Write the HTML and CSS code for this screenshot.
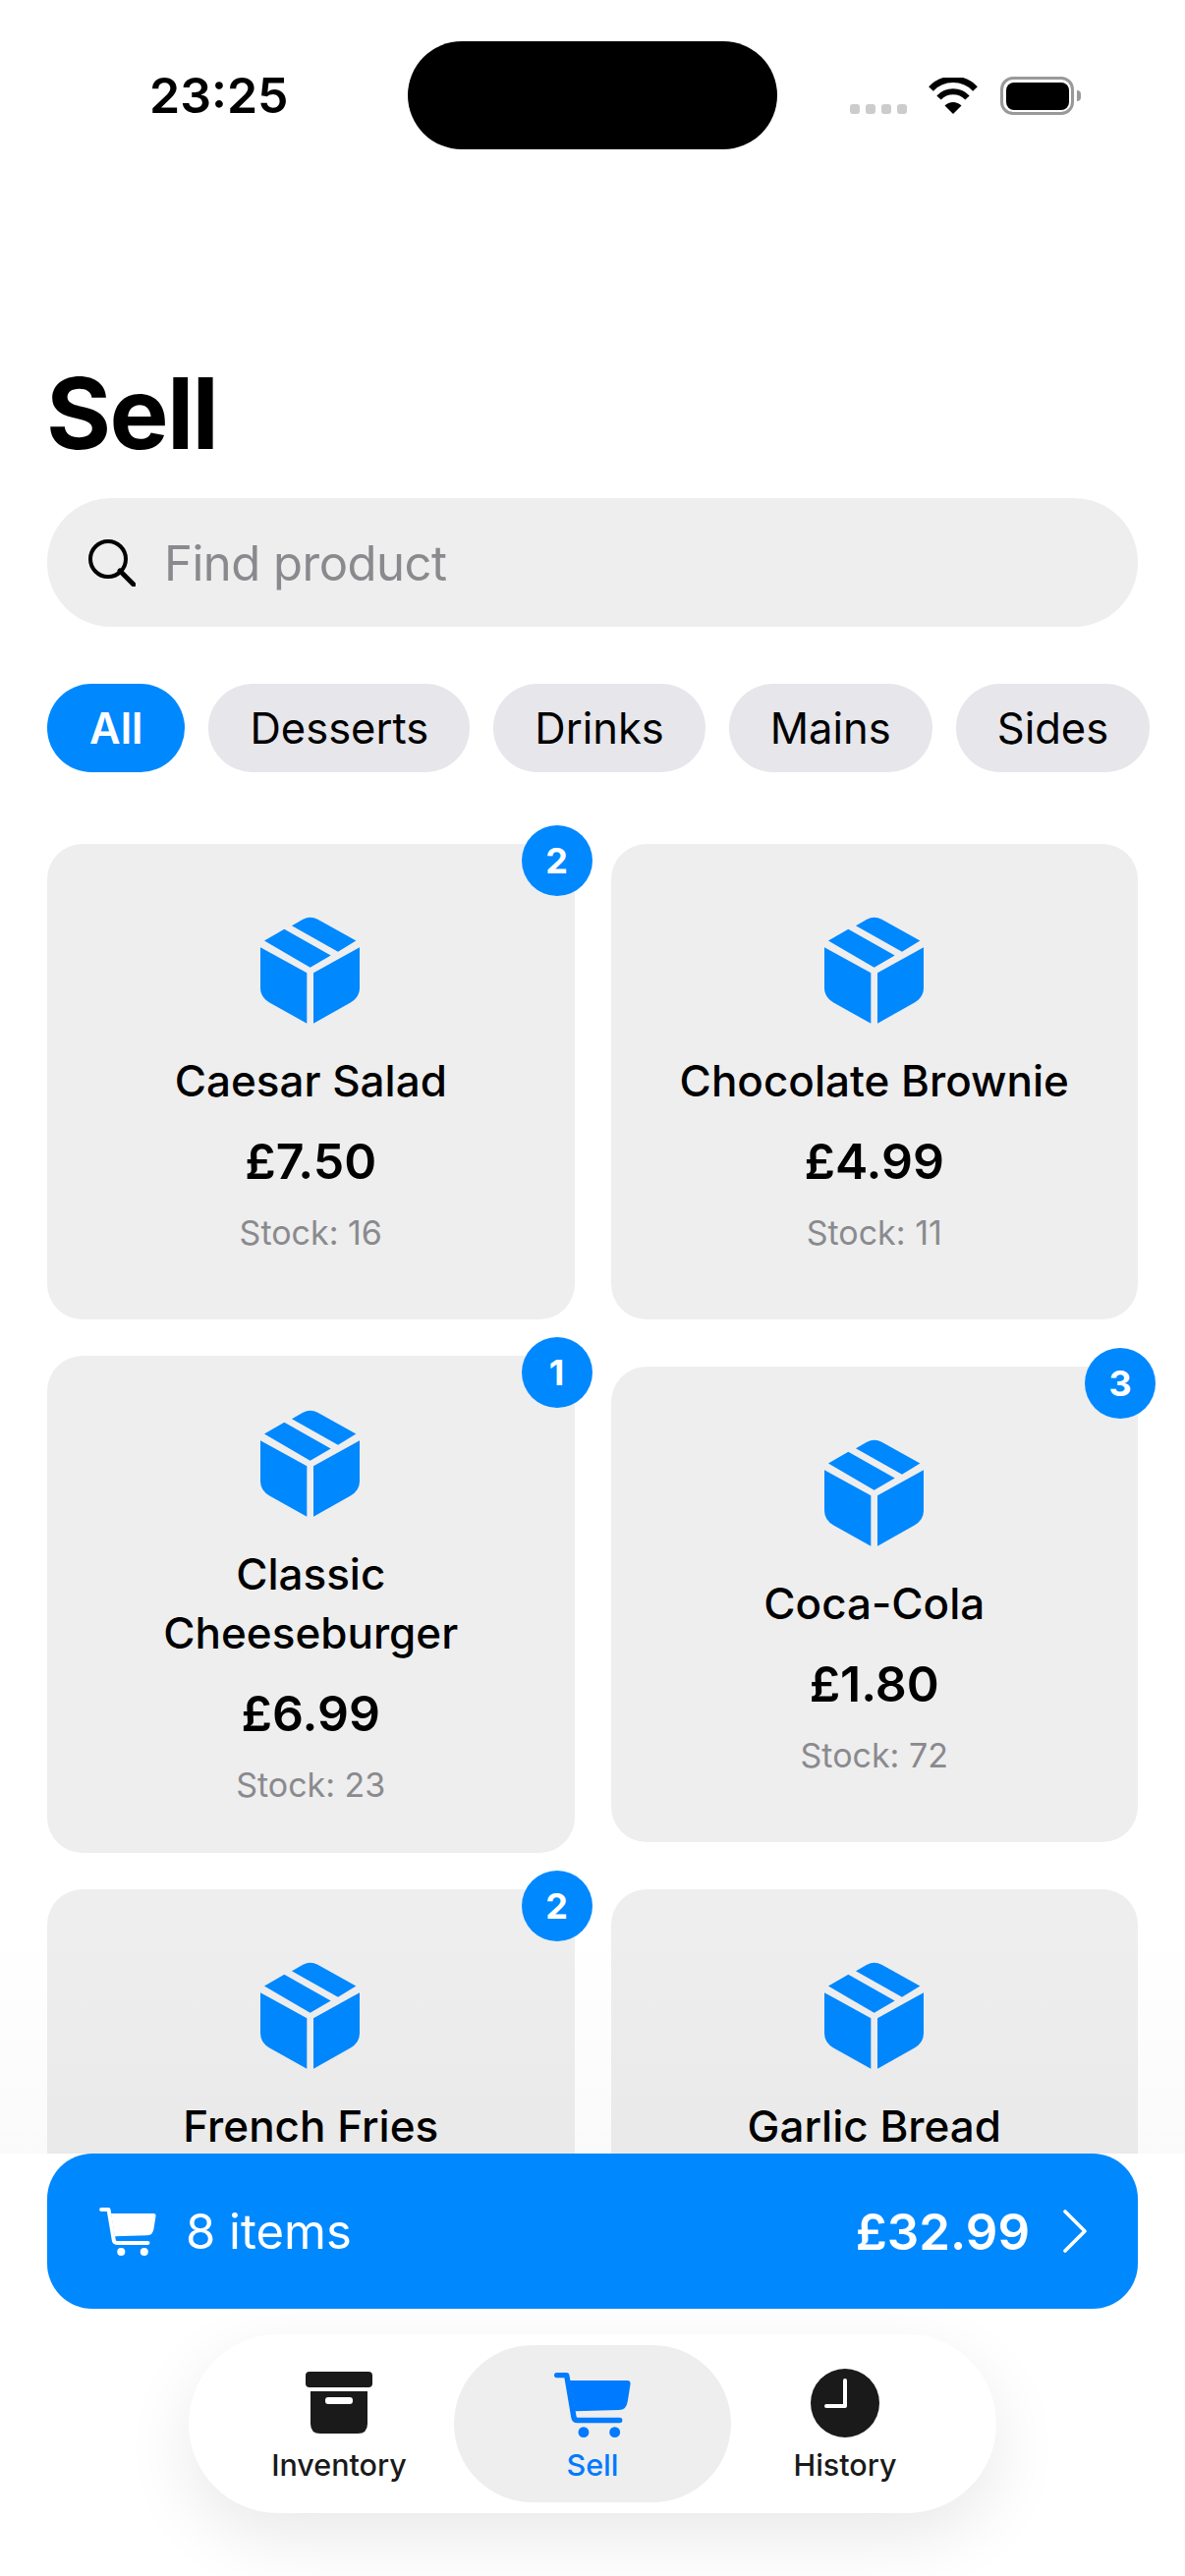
FILE: index.html
```html
<!DOCTYPE html>
<html lang="en">
<head>
<meta charset="utf-8">
<title>Sell</title>
<link rel="stylesheet" href="styles.css">
</head>
<body>
<svg class="defs" width="0" height="0" aria-hidden="true">
  <symbol id="box" viewBox="0 0 303 326">
    <path d="M0 93L142 171V326L28 262Q0 246 0 218Z"/>
    <path d="M162 171L303 93V218Q303 246 275 262L162 326Z"/>
    <path d="M12 73L73 38L215 118L152 155Z"/>
    <path d="M96 27L130 8Q152 -4 175 8L292 73L237 107Z"/>
  </symbol>
  <symbol id="cart" viewBox="0 0 172 146">
    <path d="M35 18H164Q172 18 171 26L165 64Q162 84 146 84L47 87Z"/>
    <path d="M6 6H28L44 100Q45 107 53 107H147" fill="none" stroke="currentColor" stroke-width="12" stroke-linecap="round" stroke-linejoin="round"/>
    <circle cx="66" cy="134" r="12"/>
    <circle cx="136" cy="134" r="12"/>
  </symbol>
</svg>
<div class="screen">
  <header class="status">
    <span class="time">23:25</span>
    <div class="island"></div>
    <div class="status-right">
      <div class="dots"><i></i><i></i><i></i><i></i></div>
      <svg class="wifi" viewBox="0 0 50 37">
        <path d="M2.5 11.5A31 31 0 0 1 47.5 11.5" fill="none" stroke="#000" stroke-width="6.5"/>
        <path d="M10.5 20.5A20 20 0 0 1 39.5 20.5" fill="none" stroke="#000" stroke-width="6"/>
        <path d="M25 37L16.5 28.5A12 12 0 0 1 33.5 28.5Z"/>
      </svg>
      <div class="battery"><div class="battery-fill"></div></div>
      <div class="battery-cap"></div>
    </div>
  </header>
  <main class="content">
    <h1 class="title">Sell</h1>
    <div class="search">
      <svg class="search-icon" viewBox="0 0 48 48"><circle cx="20" cy="20" r="18" fill="none" stroke="#000" stroke-width="4"/><path d="M32 32L46 46" stroke="#000" stroke-width="5" stroke-linecap="round"/></svg>
      <span class="search-text">Find product</span>
    </div>
    <div class="chips">
      <span class="chip chip-on">All</span>
      <span class="chip">Desserts</span>
      <span class="chip">Drinks</span>
      <span class="chip">Mains</span>
      <span class="chip">Sides</span>
    </div>
    <div class="grid">
      <article class="card"><span class="badge">2</span><svg class="box"><use href="#box"/></svg><div class="name">Caesar Salad</div><div class="price">£7.50</div><div class="stock">Stock: 16</div></article>
      <article class="card"><svg class="box"><use href="#box"/></svg><div class="name">Chocolate Brownie</div><div class="price">£4.99</div><div class="stock">Stock: 11</div></article>
      <article class="card"><span class="badge">1</span><svg class="box"><use href="#box"/></svg><div class="name">Classic<br>Cheeseburger</div><div class="price">£6.99</div><div class="stock">Stock: 23</div></article>
      <article class="card"><span class="badge">3</span><svg class="box"><use href="#box"/></svg><div class="name">Coca-Cola</div><div class="price">£1.80</div><div class="stock">Stock: 72</div></article>
      <article class="card card-cut"><span class="badge">2</span><svg class="box"><use href="#box"/></svg><div class="name">French Fries</div></article>
      <article class="card card-cut"><svg class="box"><use href="#box"/></svg><div class="name">Garlic Bread</div></article>
    </div>
    <div class="fade"></div>
  </main>
  <footer class="footer">
    <div class="cartbar">
      <svg class="cartbar-icon"><use href="#cart"/></svg>
      <span class="cartbar-items">8 items</span>
      <span class="cartbar-total">£32.99</span>
      <svg class="chev" viewBox="0 0 24 44"><path d="M2 2L22 22L2 42" fill="none" stroke="#fff" stroke-width="3.6" stroke-linecap="round" stroke-linejoin="round"/></svg>
    </div>
    <nav class="tabs">
      <div class="tab tab-left">
        <svg class="tab-icon tab-inv" viewBox="0 0 68 63">
          <rect width="68" height="16" rx="4"/>
          <path d="M5 20H63V53Q63 63 53 63H15Q5 63 5 53Z"/>
          <rect x="20" y="26" width="28" height="7" rx="3" fill="#fff"/>
        </svg>
        <span class="tab-label">Inventory</span>
      </div>
      <div class="tab tab-on">
        <svg class="tab-icon tab-cart"><use href="#cart"/></svg>
        <span class="tab-label">Sell</span>
      </div>
      <div class="tab tab-right">
        <svg class="tab-icon tab-clock" viewBox="0 0 70 70">
          <circle cx="35" cy="35" r="35"/>
          <path d="M35 12V38H16" fill="none" stroke="#fff" stroke-width="4" stroke-linecap="round" stroke-linejoin="round"/>
        </svg>
        <span class="tab-label">History</span>
      </div>
    </nav>
  </footer>
</div>
</body>
</html>
```
FILE: styles.css
```css
* { box-sizing: border-box; }
html, body { margin: 0; padding: 0; background: #fff; }
body { font-family: Inter, "Liberation Sans", sans-serif; color: #000; }
.defs { position: absolute; }
.screen { width: 1206px; height: 2622px; display: flex; flex-direction: column; overflow: hidden; position: relative; }

.status { height: 190px; flex: none; display: flex; justify-content: space-between; position: relative; padding: 0 106px 0 153px; }
.time { font-size: 50px; font-weight: 600; line-height: 60px; margin-top: 67px; margin-left: -1px; }
.island { position: absolute; left: 415px; top: 42px; width: 376px; height: 110px; border-radius: 55px; background: #000; }
.status-right { display: flex; align-items: flex-start; }
.dots { display: flex; gap: 6px; margin-top: 106px; margin-right: 22px; }
.dots i { width: 10px; height: 10px; border-radius: 3px; background: #ccc; display: block; }
.wifi { width: 50px; height: 37px; margin-top: 79px; margin-right: 23px; }
.battery { width: 75px; height: 39px; margin-top: 78px; border: 3.5px solid #999; border-radius: 13px; padding: 2.5px; }
.battery-fill { width: 100%; height: 100%; background: #000; border-radius: 8px; }
.battery-cap { width: 4px; height: 11px; margin-top: 92px; margin-left: 3px; background: #999; border-radius: 0 4px 4px 0; }

.content { flex: none; height: 2002px; padding: 0 48px; overflow: hidden; position: relative; }
.title { margin: 169px 0 0 -1px; font-size: 101px; line-height: 122px; font-weight: 700; letter-spacing: -1.7px; }

.search { height: 131px; margin-top: 26px; background: #eee; border-radius: 65px; display: flex; align-items: center; padding-left: 42px; }
.search-icon { width: 48px; height: 48px; flex: none; }
.search-text { font-size: 49px; line-height: 60px; padding-top: 2px; letter-spacing: -.5px; color: #8a8a8e; margin-left: 29px; }

.chips { display: flex; gap: 24px; margin-top: 58px; height: 90px; width: 1200px; }
.chip { height: 90px; padding: 0 42px; border-radius: 45px; background: #e6e6eb; font-size: 43.5px; line-height: 90px; }
.chip-on { background: #0088ff; color: #fff; font-weight: 600; padding: 0 43px; }

.grid { display: grid; grid-template-columns: 1fr 1fr; column-gap: 37px; row-gap: 37px; margin-top: 73px; align-items: center; }
.card { position: relative; min-height: 484px; background: #eee; border-radius: 36px; padding: 55px 20px 47px; display: flex; flex-direction: column; align-items: center; justify-content: center; text-align: center; }
.card-cut { justify-content: flex-start; padding-top: 74px; }
.box { width: 101px; height: 109px; fill: #0088ff; flex: none; margin-right: 1px; }
.name { font-size: 44px; line-height: 60px; margin-top: 28px; font-weight: 500; }
.price { font-size: 50px; line-height: 64px; margin-top: 20px; margin-bottom: 1px; font-weight: 600; }
.stock { font-size: 34px; line-height: 44px; margin-top: 18px; color: #8a8a8e; }
.badge { position: absolute; top: -19px; right: -18px; width: 72px; height: 72px; border-radius: 50%; background: #0088ff; color: #fff; font-size: 36px; font-weight: 700; line-height: 72px; text-align: center; }

.fade { position: absolute; left: 0; right: 0; bottom: 0; height: 232px; background: linear-gradient(rgba(0,0,0,0), rgba(0,0,0,.018)); }

.footer { flex: none; height: 430px; display: flex; flex-direction: column; align-items: center; }
.cartbar { width: 1110px; height: 158px; flex: none; border-radius: 46px; background: #0088ff; color: #fff; display: flex; align-items: center; padding: 0 52px 0 53px; position: relative; z-index: 1; }
.cartbar-icon { width: 58px; height: 49px; fill: #fff; color: #fff; }
.cartbar-items { font-size: 49px; margin-left: 30px; flex: 1; }
.cartbar-total { font-size: 51px; font-weight: 600; }
.chev { width: 24px; height: 44px; margin-left: 34px; }

.tabs { width: 822px; height: 182px; margin-top: 26px; border-radius: 91px; background: #fff; box-shadow: 0 24px 70px rgba(0,0,0,.09); display: flex; align-items: center; padding: 0 0 0 36px; }
.tab { height: 160px; display: flex; flex-direction: column; align-items: center; border-radius: 80px; padding-top: 27px; color: #1a1a1a; fill: #1a1a1a; flex: none; }
.tab-left { width: 234px; }
.tab-right { width: 232px; }
.tab-on { width: 282px; background: #eee; color: #007aff; fill: #007aff; }
.tab-icon { display: block; flex: none; height: 70px; }
.tab-inv { width: 68px; height: 63px; margin: 0 0 7px; }
.tab-cart { width: 78px; height: 68px; margin-bottom: 2px; }
.tab-clock { width: 70px; margin-top: -3px; margin-bottom: 3px; }
.tab-label { font-size: 30.5px; line-height: 36px; font-weight: 500; margin-top: 7px; }
```
